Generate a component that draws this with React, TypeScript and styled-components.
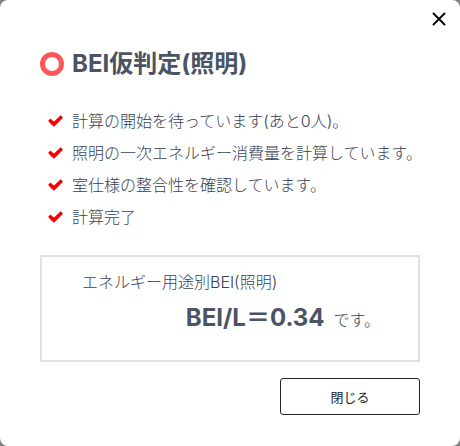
import React from "react";
import styled, { createGlobalStyle } from "styled-components";

const Global = createGlobalStyle`
  * { box-sizing: border-box; }
  body { margin: 0; background: #808080; }
`;
const Dialog = styled.main`
  min-height: 100vh;
  padding: 44px 40px 31px;
  position: relative;
  background: #fff;
  border-radius: 8px;
  color: #384152;
  font: 300 16px/24px Inter, "Noto Sans CJK JP", sans-serif;
`;
const CloseIcon = styled.button`
  position: absolute;
  top: 12px;
  right: 14px;
  display: flex;
  padding: 0;
  border: 0;
  background: none;
`;
const Heading = styled.header`
  display: flex;
  align-items: center;
  gap: 8px;
`;
const Title = styled.h1`
  margin: 0;
  color: #4a5464;
  font-size: 24px;
  line-height: 40px;
  font-weight: 700;
`;
const Steps = styled.ul`
  list-style: none;
  margin: 21px 0 0;
  padding: 0 0 0 8px;
`;
const Step = styled.li`
  display: flex;
  align-items: center;
  gap: 8px;
  height: 32px;
  white-space: nowrap;
`;
const CheckMark = styled.svg`
  flex: none;
  width: 16px;
  height: 16px;
  fill: #f00;
`;
const Result = styled.section`
  margin-top: 22px;
  padding: 13px 38px 16px 40px;
  border: 2px solid #dee2e6;
`;
const Text = styled.p`
  margin: 0;
`;
const Score = styled.p`
  margin: 0;
  display: flex;
  justify-content: flex-end;
  align-items: baseline;
  gap: 9px;
  line-height: 48px;
`;
const Value = styled.strong`
  color: #4a5464;
  font-size: 24px;
  font-weight: 700;
`;
const Footer = styled.footer`
  display: flex;
  justify-content: flex-end;
  margin-top: 16px;
`;
const CloseButton = styled.button`
  width: 140px;
  height: 37px;
  border: 1px solid #212529;
  border-radius: 3px;
  background: #fff;
  color: #212529;
  font: 400 13px Inter, "Noto Sans CJK JP", sans-serif;
`;
const steps = [
  "計算の開始を待っています(あと0人)。",
  "照明の一次エネルギー消費量を計算しています。",
  "室仕様の整合性を確認しています。",
  "計算完了",
];

function Check() {
  return (
    <CheckMark viewBox="86 74 1712 1712" aria-hidden="true">
      <path d="M1671 566q0 40-28 68l-724 724-136 136q-28 28-68 28t-68-28l-136-136-362-362q-28-28-28-68t28-68l136-136q28-28 68-28t68 28l294 295 656-657q28-28 68-28t68 28l136 136q28 28 28 68z" />
    </CheckMark>
  );
}

export default function App() {
  return (
    <>
      <Global />
      <Dialog>
        <CloseIcon aria-label="閉じる">
          <svg width="14" height="14" viewBox="0 0 14 14" stroke="#000" strokeWidth="1.9" strokeLinecap="round"><path d="M1.5 1.5L12.5 12.5M12.5 1.5L1.5 12.5" /></svg>
        </CloseIcon>
        <Heading>
          <svg width="24" height="24" viewBox="0 0 24 24" aria-hidden="true"><circle cx="12" cy="12" r="9.5" fill="none" stroke="#ff5757" strokeWidth="5" /></svg>
          <Title>BEI仮判定(照明)</Title>
        </Heading>
        <Steps>
          {steps.map((s) => <Step key={s}><Check />{s}</Step>)}
        </Steps>
        <Result>
          <Text>エネルギー用途別BEI(照明)</Text>
          <Score><Value>BEI/L＝0.34</Value>です。</Score>
        </Result>
        <Footer><CloseButton>閉じる</CloseButton></Footer>
      </Dialog>
    </>
  );
}
